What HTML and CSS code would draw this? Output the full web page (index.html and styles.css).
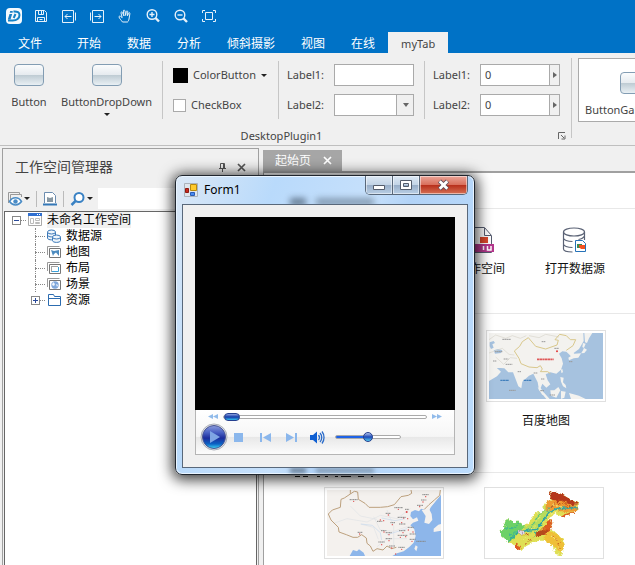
FILE: index.html
```html
<!DOCTYPE html>
<html lang="zh-CN">
<head>
<meta charset="utf-8">
<title>Form1</title>
<link rel="stylesheet" href="styles.css">
</head>
<body>
<div class="app">
  <header class="titlebar">
    <div class="quick">
      <svg class="logo" width="16" height="16" viewBox="0 0 16 16"><rect width="16" height="16" rx="4" fill="#f4fafe"/><path d="M2 12.500h4c5 .3 7.500-2.500 7.500-5.500 0-2.500-2-3.800-6-3.500M9.500 6l-1.800 4" fill="none" stroke="#1583c6" stroke-width="2"/><path d="M3.500 6h2.700l-1.700 5.500H1.800zM4.200 3h2.500v1.700H3.700z" fill="#1b7fc4"/></svg>
      <button class="qbtn" aria-label="保存"><svg width="16" height="16" viewBox="0 0 16 16"><path d="M2.500 2.500h9l2 2v9h-11zM5.500 2.500v4h5v-4M8.500 3v3M4.500 13.500v-4h7v4M6.500 11.500h3"/></svg></button>
      <button class="qbtn" aria-label="后退"><svg width="16" height="16" viewBox="0 0 16 16"><path d="M1.500 2.500h11v12h-11zM14.500 4.500v8M4 8.500h6.500M6.500 6L4 8.500 6.500 11"/></svg></button>
      <button class="qbtn" aria-label="前进"><svg width="16" height="16" viewBox="0 0 16 16"><path d="M3.500 2.500h11v12h-11zM1.500 4.500v8M5.500 8.500h6.500M9.500 6l2.500 2.500L9.500 11"/></svg></button>
      <button class="qbtn" aria-label="平移"><svg width="16" height="16" viewBox="0 0 16 16"><path d="M5.500 14C4 12 2.500 10.500 2 9c-.2-1 1-1.300 2-.3l1.200 1L4 5c-.2-1.200 1-1.500 1.500-.3L7 8 6.300 3c0-1.200 1.400-1.300 1.700 0L8.700 7.500 9.300 3.500c.2-1 1.500-.8 1.500.3l-.3 4 1-2.600c.5-1 1.600-.5 1.400.5L12 11c-.3 1.500-.8 2.500-1.500 3z"/></svg></button>
      <button class="qbtn" aria-label="放大"><svg width="16" height="16" viewBox="0 0 16 16"><circle cx="7" cy="6.500" r="4.800" stroke-width="1.400"/><path d="M4.500 6.500h5M7 4v5" stroke-width="1.400"/><path d="M10.500 10l3.500 3.500" stroke-width="2.400"/></svg></button>
      <button class="qbtn" aria-label="缩小"><svg width="16" height="16" viewBox="0 0 16 16"><circle cx="7" cy="7" r="4.800" stroke-width="1.400"/><path d="M4.500 7h5" stroke-width="1.400"/><path d="M10.500 10.500l3.500 3.500" stroke-width="2.400"/></svg></button>
      <button class="qbtn" aria-label="全幅"><svg width="16" height="16" viewBox="0 0 16 16"><path d="M4.500 4.500h7v7h-7zM1.500 5V2.500H4M12 2.500h2.500V5M14.500 11v2.500H12M4 13.500H1.500V11"/></svg></button>
    </div>
    <nav class="tabs">
      <a class="tab file" href="#">文件</a>
      <a class="tab" href="#">开始</a>
      <a class="tab" href="#">数据</a>
      <a class="tab" href="#">分析</a>
      <a class="tab" href="#">倾斜摄影</a>
      <a class="tab" href="#">视图</a>
      <a class="tab" href="#">在线</a>
      <a class="tab active" href="#">myTab</a>
    </nav>
  </header>

  <section class="ribbon">
    <div class="group">
      <div class="cols">
        <div class="bigs">
          <button class="big first"><span class="tile-icon"></span>Button</button>
          <button class="big second"><span class="tile-icon"></span>ButtonDropDown<i class="caret"></i></button>
        </div>
        <div class="col colorcol">
          <button class="colorbtn"><span class="swatch"></span>ColorButton<i class="caret"></i></button>
          <label class="check"><input type="checkbox">CheckBox</label>
        </div>
        <div class="col">
          <div class="field"><label for="t1">Label1:</label><input class="box" id="t1" type="text"></div>
          <div class="field"><label for="s1">Label2:</label><span class="combo"><select class="box" id="s1"><option></option></select></span></div>
        </div>
        <div class="col">
          <div class="field"><label for="n1">Label1:</label><span class="spin"><input id="n1" type="text" value="0"><button aria-label="调整"></button></span></div>
          <div class="field"><label for="n2">Label2:</label><span class="spin"><input id="n2" type="text" value="0"><button aria-label="调整"></button></span></div>
        </div>
      </div>
      <div class="caption"><span>DesktopPlugin1</span>
        <button class="launcher" aria-label="选项"><svg width="8" height="8" viewBox="0 0 8 8"><path d="M.5 7V.5H7M3 3l3 3M7 3.500V7H3.500" fill="none" stroke="#666"/></svg></button>
      </div>
    </div>
    <div class="gallery">
      <button class="gitem"><span class="tile-icon"></span>ButtonGallery</button>
    </div>
  </section>

  <main class="work">
    <aside class="dock">
      <div class="dockhead">
        <h2>工作空间管理器</h2>
        <button class="plain" aria-label="固定"><svg width="9" height="9" viewBox="0 0 9 9"><path d="M2.500 5V.5h4V5M1 5.500h7M4.500 5.500V9" fill="none" stroke="#555"/><path d="M5 1h2v4H5z" fill="#555"/></svg></button>
        <button class="plain" aria-label="关闭"><svg width="9" height="9" viewBox="0 0 9 9"><path d="M1 1l7 7M8 1L1 8" fill="none" stroke="#555" stroke-width="1.700"/></svg></button>
      </div>
      <div class="docktools">
        <button class="plain tool" aria-label="显示"><svg width="16" height="16" viewBox="0 0 16 16"><path d="M1.500 12V1.500h11V4M3.500 9V3.500h11V6" fill="none" stroke="#999"/><path d="M2.500 10.500c3-5 9-5 12 0-3 4.500-9 4.500-12 0z" fill="#fff" stroke="#4a8cc6" stroke-width="1.500"/><circle cx="8.500" cy="10.500" r="2.200" fill="#4a8cc6"/></svg><i class="caret"></i></button>
        <button class="plain tool mid" aria-label="图层"><svg width="16" height="16" viewBox="0 0 16 16"><path d="M2.500 12V1.500h8l3 3V12" fill="#fff" stroke="#6c8db0"/><path d="M5 6l3 1 3-1v5H5z" fill="#8797a2"/><path d="M1 13.500h14" stroke="#3579b8" stroke-width="2"/></svg></button>
        <button class="plain tool" aria-label="查找"><svg width="16" height="16" viewBox="0 0 16 16"><circle cx="9" cy="6.500" r="4.500" fill="#fff" stroke="#3a82c4" stroke-width="2"/><path d="M5.500 10L1.500 14" stroke="#3a82c4" stroke-width="2.500"/></svg><i class="caret"></i></button>
        <input class="find" type="text" aria-label="查找内容">
      </div>
      <ul class="tree">
        <li class="root"><span class="toggle minus"></span><i class="dash"></i><svg width="16" height="16" viewBox="0 0 16 16"><path d="M1.500 1.500h13v12h-13z" fill="#fff" stroke="#aaa"/><path d="M1 1h14v3H1z" fill="#2f6fd0"/><path d="M10 2h1v1h-1zM12 2h1v1h-1z" fill="#fff"/><path d="M3.500 6.500h3v5h-3zM8.500 6.500h4v2h-4zM8.500 10.500h4v1h-4z" fill="none" stroke="#bbb"/></svg><span class="name picked">未命名工作空间</span></li>
        <li class="leaf"><i class="dash"></i><svg width="16" height="16" viewBox="0 0 16 16"><g fill="#eef5fc" stroke="#3b78b8"><path d="M1.500 4v6c0 2.500 8 2.500 8 0V4"/><ellipse cx="5.500" cy="4" rx="4" ry="2"/><path d="M1.500 7c0 2.500 8 2.500 8 0" fill="none"/><path d="M6.500 9v3.500c0 2.500 8 2.500 8 0V9"/><ellipse cx="10.500" cy="9" rx="4" ry="2"/></g></svg><span class="name">数据源</span></li>
        <li class="leaf"><i class="dash"></i><svg width="16" height="16" viewBox="0 0 16 16"><path d="M1.500 11V2.500h12" fill="none" stroke="#999"/><path d="M3.500 4.500h11v9h-11z" fill="#fff" stroke="#777"/><path d="M5 6l3 1 5-1v6L10 8.500 8 10l-1 2z" fill="#4c8bc0"/></svg><span class="name">地图</span></li>
        <li class="leaf"><i class="dash"></i><svg width="16" height="16" viewBox="0 0 16 16"><path d="M1.500 11V2.500h12" fill="none" stroke="#999"/><path d="M3.500 4.500h11v9h-11z" fill="#fff" stroke="#777"/><path d="M5.500 11.500v-5h7" fill="none" stroke="#444" stroke-dasharray="1 1"/><path d="M6 11.500h6.500V7" fill="none" stroke="#3aa0d8"/></svg><span class="name">布局</span></li>
        <li class="leaf"><i class="dash"></i><svg width="16" height="16" viewBox="0 0 16 16"><path d="M1.500 11V2.500h12" fill="none" stroke="#999"/><path d="M3.500 4.500h11v9h-11z" fill="#fff" stroke="#777"/><circle cx="9" cy="9" r="3.700" fill="#7fa8dc"/><path d="M7 6l2 2-1 2-2-1zM10 8l2 1-1 2z" fill="#f2f7fd"/></svg><span class="name">场景</span></li>
        <li class="branch"><span class="toggle plus"></span><i class="dash"></i><svg width="16" height="16" viewBox="0 0 16 16"><path d="M2.500 13.500v-11h5l1 2h6v9zM2.500 6.500h12" fill="#fff" stroke="#2c6cb0"/></svg><span class="name">资源</span></li>
      </ul>
    </aside>

    <section class="doc">
      <div class="doctab"><span>起始页</span><button class="plain" aria-label="关闭起始页"><svg width="9" height="9" viewBox="0 0 9 9"><path d="M1 1l7 7M8 1L1 8" fill="none" stroke="#fff" stroke-width="1.700"/></svg></button></div>
      <div class="page">
        <div class="row blank"></div>
        <div class="row links">
          <a class="link" href="#"><svg width="44" height="28" viewBox="0 0 44 28"><path d="M8.500 26.500v-25h17l7 8v17z" fill="#fff" stroke="#555b6e"/><path d="M25.500 2v7.500H32" fill="none" stroke="#555b6e"/><path d="M21 11h8v6h-8z" fill="#d9482b"/><path d="M15 18h20v8H15z" fill="#b5388d"/><path d="M24.500 20v4M28.500 20v4h3.500v-4" fill="none" stroke="#fff" stroke-width="1.500"/></svg>工作空间</a>
          <a class="link" href="#"><svg width="28" height="28" viewBox="0 0 28 28"><g fill="none" stroke="#5a6275" stroke-width="1.200"><ellipse cx="13" cy="6" rx="10.500" ry="4"/><path d="M2.500 6v17c0 2 4 3 9 3M23.500 6v8M2.500 12c0 2 4 3.500 9 3.500M2.500 18c0 2 4 3.500 9 3.500M23.500 10c-1 2-3 3-6 3.500"/></g><path d="M14.500 14.500h7l3 3v8h-10z" fill="#fff" stroke="#2672b8"/><path d="M16 18h5v4h-5z" fill="#3b8b52"/><path d="M18 19h6v4h-4l-2-2z" fill="#f4511e"/></svg>打开数据源</a>
        </div>
        <div class="row maps">
          <a class="card" href="#"><span class="thumb"><svg viewBox="0 0 342 198">
            <rect width="342" height="198" fill="#a6c2df"/>
            <path d="M0 0H283L284 24 270 48 254 60 262 72 250 74 240 64 232 56 220 55 210 62 218 76 222 92 216 110 202 122 184 118 170 124 176 142 184 154 172 164 160 152 155 165 166 182 160 186 150 170 146 148 133 122 120 128 100 146 97 166 88 160 72 118 58 118 46 106 22 104 16 98 36 116 24 130 0 144ZM286 60l8-10-14-8 2-12 8 2-8 20-14 22-14 2-14 6-2-8 18-12zM288 28l-2-28h24l-10 16-6 14zM216 110l4-2 2 10-5 2zM214 132l10 2-2 14 8 8 2 10-10-6-6-14zM184 172l12 0 12-10 6 10-12 22-16-6zM146 162l20 18 16 18H172l-22-26zM216 174l14 2-4 18-10 4zM240 180l30 8 20 10h-44z" fill="#f3f2ef"/>
            <path d="M2 28l12-4 4 6-8 4 4 10-8 4-4-8zM14 52l14-4 12 4-4 8-18 2z" fill="#a6c2df"/>
            <path d="M0 20l20-14 30 10 20-8 24 8 18-8M0 60l40-14 20 18 16 2M20 72l24 22 20-20 20 2M120 8l30 6 20-10 40 8" fill="none" stroke="#d8d4cc" stroke-width="2"/>
            <path d="M76 54l16-14 8-14 18-12 22 26 30 8 34-12 4-14-10-2 14-16 20 4 12 12h16l-8 18-20 14M76 54l14 22 6 16 24 10 24 2 10-6 6 10-6 8 22 0 8 6" fill="none" stroke="#d9c88c" stroke-width="3"/>
            <path d="M144 79h50" stroke="#df5a5a" stroke-width="5" stroke-dasharray="7 1"/><circle cx="204" cy="55" r="3" fill="#e23b3b"/>
            <path d="M40 19h26M158 26h12M196 46h14M12 84h10M44 78h14M50 94h20M18 56h22M86 116h10M134 120h12M156 138h10M240 86h10M60 172h20M182 186h16M154 173h12" stroke="#999" stroke-width="3" stroke-dasharray="5 1"/>
            <path d="M34 142h26M104 142h24" stroke="#4280bd" stroke-width="4" stroke-dasharray="7 1"/>
          </svg></span>百度地图</a>
        </div>
        <div class="row more">
          <svg class="mark" width="84" height="4" viewBox="0 0 84 4"><path d="M3 1h5v1H3zM11 1h5v1h-5zM25 1h3v1h-3zM33 1h3v1h-3zM43 1h3v1h-3zM49 1h10v1H49zM66 1h6v1h-6zM79 1h2v1h-2z" fill="#111"/></svg>
          <div class="cards">
            <a class="card" href="#" aria-label="中国地图"><span class="thumb"><svg viewBox="0 0 342 198">
              <rect width="342" height="198" fill="#f4f1ee"/>
              <path d="M342 12L312 50 306 62 282 56 276 64 264 60 252 66 250 78 258 88 270 82 274 92 258 98 250 106 262 118 266 138 260 158 246 172 230 184 210 190 196 198H342ZM68 198l10-18 12 4 6-6 14 10 4 10z" fill="#8db6ea"/>
              <path d="M284 60l22-4 8 16 2 18-10 12-14-4 4-20zM320 116l14-12 8-2v20l-22 4zM266 166l6 4-4 14-6-8zM146 188l10 4-4 6h-8zM300 0h42v14l-28 34-10 10-20-2z" fill="#f4f1ee"/>
              <g fill="none" stroke="#e0e2e6" stroke-width="2"><path d="M20 100l40-14 60 10 40-20 50 10 40-30M140 80l20 40 40 4 40-14M150 170l30-24 60 0M180 60l20 50 0 60M70 48l30 30 50 10M100 102l40 10 14 36"/></g>
              <path d="M102 102l34 4 24 22 4 22M164 84l40 8 30-6M180 134l60-18" fill="none" stroke="#c6daef" stroke-width="2"/>
              <path d="M70 0v12l-18 12-10 4-2 24-24 8-12 12 8 18 22 22 2 14 22 8 20 8 14 0 12-8 14 10 2 16 10 8 8 16 12-8 18 4 12-12 14 8 14-4M70 12l12-8 10 2 2 22 20 12 12 12 34 0 22-2 20-6 20-24 22-4 10-6-2-10M340 0l-2 16-16 14-16 14-14 14" fill="none" stroke="#bda17e" stroke-width="3"/>
              <g fill="#df4a4a"><circle cx="80" cy="34" r="2"/><circle cx="98" cy="132" r="2"/><circle cx="160" cy="90" r="2"/><circle cx="170" cy="92" r="2"/><circle cx="184" cy="75" r="2"/><circle cx="214" cy="58" r="2"/><circle cx="239" cy="66" r="3"/><circle cx="230" cy="84" r="2"/><circle cx="242" cy="86" r="2"/><circle cx="196" cy="104" r="2"/><circle cx="224" cy="98" r="2"/><circle cx="171" cy="126" r="2"/><circle cx="186" cy="134" r="2"/><circle cx="228" cy="128" r="2"/><circle cx="244" cy="120" r="2"/><circle cx="258" cy="126" r="2"/><circle cx="236" cy="140" r="2"/><circle cx="220" cy="142" r="2"/><circle cx="186" cy="152" r="2"/><circle cx="164" cy="164" r="2"/><circle cx="194" cy="174" r="2"/><circle cx="224" cy="178" r="2"/><circle cx="255" cy="154" r="2"/><circle cx="278" cy="50" r="2"/><circle cx="288" cy="36" r="2"/><circle cx="296" cy="20" r="2"/><circle cx="206" cy="192" r="2"/></g>
              <path d="M68 29h24M92 127h14M150 94h16M176 70h14M202 53h26M234 58h12M212 82h24M190 98h14M216 102h20M162 122h16M176 128h18M216 122h20M242 112h18M248 132h18M212 136h30M176 146h18M154 156h20M186 168h18M214 172h20M248 148h18M270 46h18M282 30h16M286 14h20M268 154h28" stroke="#888" stroke-width="3" stroke-dasharray="4 1"/>
            </svg></span></a>
            <a class="card" href="#" aria-label="地形图"><span class="thumb"><svg viewBox="0 0 342 198">
              <defs>
                <filter id="rough" x="-5%" y="-5%" width="110%" height="110%"><feTurbulence type="fractalNoise" baseFrequency=".09" numOctaves="3" seed="4"/><feDisplacementMap in="SourceGraphic" scale="16" xChannelSelector="R" yChannelSelector="G"/></filter>
                <clipPath id="land"><path d="M186 6L195 1 223 12 248 26 271 38 275 58 258 70 228 80 203 72 186 85 196 100 188 118 208 128 228 150 231 172 221 196 205 192 195 165 173 152 155 152 138 158 118 168 108 178 93 182 83 166 61 158 53 145 36 130 53 115 50 98 63 88 78 96 98 95 106 107 125 100 138 80 146 67 166 67 173 40 191 28z"/></clipPath>
              </defs>
              <g filter="url(#rough)">
                <g clip-path="url(#land)">
                  <rect width="342" height="198" fill="#dfdf55"/>
                  <path d="M34 80h66l14 26-16 24-30 28-38-14z" fill="#6dd166"/>
                  <path d="M110 110l24-6 24-44 30-14 18 8-24 18-18 30-30 24-24 4z" fill="#b8dc5c"/>
                  <path d="M180 30l34-4 30 10 32 14 2 14-46 2-34-8-24 6z" fill="#ee9a30"/>
                  <path d="M182 0l36 6 30 20 26 16-18 4-28-14-20 2-26-16z" fill="#b5381c"/>
                  <path d="M222 76l48-14-6 14-36 8zM190 84l12 14-10 22-16 14-30 2 24-20zM84 160l18 8-4 16-14-2z" fill="#dd5a20"/>
                  <path d="M186 124l30 10 18 40-14 14-20-20-34-20z" fill="#efbf38"/>
                  <path d="M144 134l26-16 16 4-16 14z" fill="#b5481c"/>
                  <path d="M62 156l30-28 34-8 20-2 20-22 22-32 24-8 60-4" fill="none" stroke="#30a5a0" stroke-width="5"/>
                  <path d="M46 114l30 2 20-14M66 134l34-14M132 116l18-34 20-20M154 118l-14 20M176 66l20-20" fill="none" stroke="#3fb792" stroke-width="3"/>
                  <path d="M206 36l34 14M214 28l40 24M160 120l26-18M170 128l22-14M200 138l14 16M216 160l4 18M128 152l12-12M114 160l14-10M190 50l14-6M110 138l20-8" stroke="#c14a1a" stroke-width="3" stroke-dasharray="6 4"/>
                  <path d="M196 44l30 8M180 74l30-6M146 96l16-18M124 124l20-14M190 134l20 14M104 150l18-6M214 170l10 10" stroke="#f4ec79" stroke-width="3" stroke-dasharray="7 4"/>
                  <path d="M92 124l8-3 10 3 4 5-8 4-12-3z" fill="#dfdbe6" stroke="#a33c66"/>
                </g>
              </g>
            </svg></span></a>
          </div>
        </div>
      </div>
    </section>
  </main>

  <div class="dialog" role="dialog" aria-labelledby="dlg">
    <div class="dlghead">
      <svg width="14" height="14" viewBox="0 0 14 14"><path d="M.5.5h13v13H.5z" fill="#dfe5ec" stroke="#aab2bb"/><path d="M6.500 1.500h6v6h-6z" fill="#ffca2c" stroke="#b78a10"/><path d="M1.500 5.500h3v4h-3z" fill="#c8291c" stroke="#8e1a12"/><path d="M6.500 9.500h4v3h-4z" fill="#4a8cf0" stroke="#2a5cb5"/></svg>
      <h1 id="dlg">Form1</h1>
      <div class="winbtns">
        <button aria-label="最小化"><svg width="13" height="13" viewBox="0 0 13 13"><path d="M.5 6.500h11v4H.5z" fill="#fff" stroke="#545c6b"/></svg></button>
        <button aria-label="最大化"><svg width="13" height="13" viewBox="0 0 13 13"><path d="M.5 1.500h11v9H.5zM3.500 4.500h5v3h-5z" fill="#fff" fill-rule="evenodd" stroke="#545c6b"/></svg></button>
        <button class="close" aria-label="关闭窗口"><svg width="13" height="13" viewBox="0 0 13 13"><path d="M2.500 2l8 8M10.500 2l-8 8" stroke="#5b4a58" stroke-width="4.500"/><path d="M2.700 2.200l7.600 7.600M10.300 2.200L2.700 9.800" stroke="#fff" stroke-width="2.800"/></svg></button>
      </div>
    </div>
    <div class="client">
      <div class="video"></div>
      <div class="player">
        <div class="seekrow">
          <button class="plain" aria-label="快退"><svg width="10" height="7" viewBox="0 0 10 7"><path d="M5 1v5L0 3.500zM10 1v5L5 3.500z" fill="#91bbea"/></svg></button>
          <input class="seek" type="range" min="0" max="100" value="0" aria-label="进度">
          <button class="plain" aria-label="快进"><svg width="10" height="7" viewBox="0 0 10 7"><path d="M0 1v5l5-2.500zM5 1v5l5-2.500z" fill="#91bbea"/></svg></button>
        </div>
        <div class="ctlrow">
          <button class="play" aria-label="播放"><svg width="28" height="28" viewBox="0 0 28 28"><defs><linearGradient id="pg" x1="0" y1="0" x2="0" y2="1"><stop offset="0" stop-color="#8b9bdc"/><stop offset=".3" stop-color="#4a62c4"/><stop offset=".55" stop-color="#1c2c9c"/><stop offset=".8" stop-color="#0b62c4"/><stop offset="1" stop-color="#3fd8f4"/></linearGradient></defs><circle cx="14" cy="14" r="13" fill="#e9ebf0" stroke="#a9adb5"/><circle cx="14" cy="14" r="11.500" fill="url(#pg)" stroke="#4a5590"/><path d="M10 8L20 14l-10 6z" fill="#7fa6e4"/></svg></button>
          <button class="plain" aria-label="停止"><svg width="16" height="14" viewBox="0 0 16 14"><path d="M3 3h9v9H3z" fill="#8bb7ec"/></svg></button>
          <button class="plain" aria-label="上一个"><svg width="16" height="14" viewBox="0 0 16 14"><path d="M3 3h2v9H3zM14 3v9L6 7.500z" fill="#8bb7ec"/></svg></button>
          <button class="plain" aria-label="下一个"><svg width="16" height="14" viewBox="0 0 16 14"><path d="M12 3h2v9h-2zM3 3v9l8-4.500z" fill="#8bb7ec"/></svg></button>
          <button class="plain" aria-label="静音"><svg width="16" height="14" viewBox="0 0 16 14"><path d="M1 5h3L8 1.500v12L4 10H1z" fill="#0f5fd2"/><path d="M9.500 5c1.200 1.500 1.200 3.500 0 5M11 3c2.300 2.500 2.300 6.500 0 9M13 1.500c2.700 3.500 2.700 8.500 0 12" fill="none" stroke="#2a6bc9" stroke-width="1.300"/></svg></button>
          <input class="vol" type="range" min="0" max="100" value="50" aria-label="音量">
        </div>
      </div>
    </div>
  </div>
</div>
</body>
</html>
```

FILE: styles.css
```css
* { box-sizing: border-box; }
body {
  margin: 0;
  background: #f0f0f0;
  color: #444;
  font: 12px/16px "Noto Sans", "Noto Sans CJK SC", sans-serif;
}
button, input, select { font: inherit; color: inherit; margin: 0; border-radius: 0; }
button { padding: 0; border: 0; background: none; }
a { color: inherit; text-decoration: none; }
svg { display: block; flex: none; }
.plain { display: flex; align-items: center; }
.app { position: relative; display: flex; flex-direction: column; min-height: 100vh; overflow: hidden; }

.titlebar { background: #0072c6; color: #fff; }
.quick { display: flex; align-items: center; gap: 12px; height: 32px; padding-left: 6px; }
.quick .logo { margin-right: -1px; }
.qbtn svg { fill: none; stroke: #e6f1fa; }
.tabs { display: flex; height: 21px; line-height: 24px; }
.tab { padding: 0 13px; }
.tab.file { padding: 0 22px 0 18px; }
.tab.active { background: #f0f0f0; color: #444; font-size: 11px; }

.ribbon { display: flex; height: 93px; padding-top: 5px; border-bottom: 1px solid #bfbfbf; overflow: hidden; font-size: 11px; }
.group { width: 572px; flex: none; height: 80px; padding-top: 3px; border-right: 1px solid #c6c6c6; }
.cols { display: flex; height: 58px; }
.bigs { display: flex; width: 162px; }
.big { display: flex; flex-direction: column; align-items: center; padding-top: 3px; }
.big.first { width: 58px; }
.big.second { width: 96px; padding-left: 1px; }
.tile-icon { display: block; flex: none; width: 30px; height: 22px; margin-bottom: 8px; border: 1px solid #839db3; border-radius: 4px; background: linear-gradient(#fbfcfd, #e6ebef 48%, #bfccd4 52%, #e9f0f4); }
.caret { width: 0; height: 0; border: 3px solid transparent; border-top-color: #222; border-bottom: 0; }
.big .caret { margin-top: 3px; }
.col { display: flex; flex-direction: column; gap: 8px; width: 146px; padding: 3px 10px 3px 8px; border-left: 1px solid #c6c6c6; }
.colorcol { width: 116px; padding-left: 10px; padding-right: 0; }
.colorbtn, .check { display: flex; align-items: center; height: 22px; gap: 5px; }
.swatch { width: 15px; height: 15px; background: #000; }
.check input { appearance: none; width: 13px; height: 13px; border: 1px solid #aaa; background: #fff; }
.field { display: flex; align-items: center; justify-content: space-between; height: 22px; }
.box, .combo, .spin { width: 80px; height: 22px; }
.box, .spin { border: 1px solid #aaa; background: #fff; }
.combo { position: relative; display: block; }
.combo select { appearance: none; display: block; }
.combo::before { content: ""; position: absolute; inset: 1px 1px 1px auto; width: 16px; border-left: 1px solid #aaa; background: #f0f0f0; pointer-events: none; }
.combo::after { content: ""; position: absolute; top: 9px; right: 5px; border: 3px solid transparent; border-top: 4px solid #666; border-bottom: 0; pointer-events: none; }
.spin { display: flex; }
.spin input { flex: 1; min-width: 0; border: 0; padding: 0 4px; background: none; }
.spin button { display: grid; place-items: center; width: 10px; border-left: 1px solid #aaa; background: #f0f0f0; }
.spin button::before { content: ""; border: 3px solid transparent; border-left: 4px solid #666; border-right: 0; }
.caption { display: flex; align-items: center; height: 18px; margin-top: 8px; padding: 0 5px; }
.caption span { flex: 1; text-align: center; }
.gallery { flex: 1; min-width: 0; height: 64px; margin-left: 6px; padding: 13px 6px 0; border: 1px solid #aaa; border-right: 0; background: #fff; }
.gitem { display: block; text-align: left; }
.gitem .tile-icon { margin: 0 35px 8px; }

.work { display: flex; flex: 1; min-height: 0; padding-top: 2px; }
.dock { display: flex; flex-direction: column; width: 257px; flex: none; margin-left: 2px; border: 1px solid #a0a0a0; border-bottom: 0; padding: 0 1px; }
.dockhead { display: flex; align-items: center; gap: 10px; height: 39px; padding: 0 11px 3px; }
.dockhead h2 { flex: 1; margin: 0; font-size: 14px; font-weight: 400; }
.docktools { display: flex; align-items: center; height: 23px; padding: 0 0 2px 3px; }
.tool { gap: 1px; }
.docktools .mid { margin: 0 6px; padding: 0 5px; border: 1px solid #bbb; border-width: 0 1px; }
.find { flex: 1; min-width: 0; align-self: stretch; margin-left: 5px; border: 0; background: #fff; }
.tree { flex: 1; margin: 0; padding: 0; list-style: none; background: #fff; border: 1px solid #666; border-bottom: 0; color: #000; }
.tree li { display: flex; align-items: center; height: 16px; }
.root { padding-left: 7px; }
.leaf, .branch { position: relative; padding-left: 30px; }
.branch { padding-left: 26px; }
.leaf::before { content: ""; position: absolute; left: 30px; top: 0; height: 16px; border-left: 1px dotted #888; }
.toggle { width: 9px; height: 9px; border: 1px solid #888; background: linear-gradient(#2a4a9a, #2a4a9a) center / 5px 1px no-repeat, #fff; }
.plus { background: linear-gradient(#2a4a9a, #2a4a9a) center / 5px 1px no-repeat, linear-gradient(#2a4a9a, #2a4a9a) center / 1px 5px no-repeat, #fff; }
.dash { width: 5px; border-top: 1px dotted #888; margin-right: 1px; }
.leaf .dash { width: 10px; }
.name { margin-left: 4px; }
.picked { background: #f0f0f0; }

.doc { display: flex; flex-direction: column; flex: 1; min-width: 0; margin-left: 4px; padding-top: 2px; }
.doctab { display: flex; align-items: center; justify-content: space-between; width: 79px; height: 21px; padding: 0 10px 0 12px; background: #a6a6a6; color: #fff; }
.page { flex: 1; background: #fff; border: 1px solid #a0a0a0; border-top-width: 2px; border-right: 0; border-bottom: 0; }
.row { border-bottom: 1px solid #e8e8e8; color: #111; }
.blank { height: 36px; }
.links { display: flex; height: 105px; padding: 17px 0 0 170px; }
.link { display: flex; flex-direction: column; align-items: center; gap: 7px; width: 94px; }
.maps { height: 159px; padding: 16px 0 0 222px; }
.card { display: block; width: 120px; text-align: center; }
.thumb { display: block; height: 72px; margin-bottom: 11px; padding: 2px; border: 1px solid #e0e0e0; background: #fff; }
.thumb svg { width: 100%; height: 100%; }
.more { border: 0; }
.mark { margin: 2px 0 8px 28px; }
.cards { display: flex; gap: 40px; padding-left: 60px; }

.dialog { position: absolute; left: 175px; top: 175px; width: 300px; padding: 0 6px 6px; border: 1px solid #20262e; border-radius: 7px; background: linear-gradient(110deg, #dbe8f6, #b9dafb 25%, #c6e0fb 50%, #b2d3f7 60%, #bcdcfc); box-shadow: inset 0 0 0 1px #e9f4ff, 0 2px 14px 3px rgba(0, 0, 0, .75); }
/* Blurred page headings seen through the glass frame */
.dialog::before, .dialog::after { content: ""; position: absolute; left: 114px; width: 84px; height: 8px; background: linear-gradient(90deg, #46586c 16px, transparent 16px 26px, #6d8298 26px); filter: blur(3px); opacity: .7; }
.dialog::before { top: 22px; }
.dialog::after { bottom: 1px; height: 5px; filter: blur(2px); }
.dlghead { display: flex; align-items: center; height: 28px; padding-left: 2px; color: #000; }
.dlghead h1 { flex: 1; margin: 0 0 0 6px; font-size: 12px; font-weight: 400; }
.winbtns { display: flex; align-self: flex-start; height: 19px; border: 1px solid #59687a; border-top: 0; border-radius: 0 0 5px 5px; overflow: hidden; }
.winbtns button { display: grid; place-items: center; width: 27px; border-right: 1px solid #59687a; background: linear-gradient(#dce8f4, #c3d4e6 48%, #98aec8 52%, #b9cfe6); box-shadow: inset 0 0 0 1px rgba(255, 255, 255, .5); }
.winbtns .close { width: 47px; border: 0; background: linear-gradient(#eba598, #d9705d 48%, #b8301c 52%, #d67155); }
.client { position: relative; z-index: 1; padding: 12px; border: 1px solid #59687a; background: #f0f0f0; }
.video { height: 193px; background: #000; }
.player { height: 45px; border: 1px solid #b5b5b5; border-top: 0; background: linear-gradient(#fff, #f6f6f6 60%, #e8e8e8 62%, #fcfcfc); }
.seekrow { display: flex; align-items: center; justify-content: space-between; height: 13px; padding: 0 12px; }
.ctlrow { display: flex; align-items: center; gap: 10px; height: 28px; padding-left: 4px; }
.play + .plain { margin-left: -7px; }
input[type="range"] { appearance: none; background: none; height: 12px; }
.seek { width: 204px; }
.seek::-webkit-slider-runnable-track { height: 4px; border: 1px solid #aaa; border-radius: 2px; background: #fff; }
.seek::-webkit-slider-thumb { appearance: none; width: 16px; height: 8px; margin-top: -3px; border: 1px solid #25408f; border-radius: 4px; background: linear-gradient(#8da3e0, #123aa8 50%, #35c0ee); }
.vol { width: 66px; }
.vol::-webkit-slider-runnable-track { height: 4px; border: 1px solid #aaa; border-radius: 2px; background: linear-gradient(90deg, #1f63e6 50%, #fff 50%); }
.vol::-webkit-slider-thumb { appearance: none; width: 10px; height: 10px; margin-top: -4px; border: 1px solid #25408f; border-radius: 5px; background: linear-gradient(#b3c4ee, #1c49b8 50%, #55cdf2); }
```
